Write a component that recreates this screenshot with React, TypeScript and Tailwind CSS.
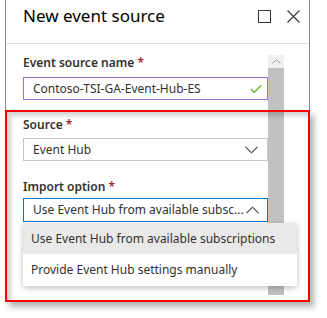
import React from 'react';

const font = { fontFamily: '"Noto Sans", "Open Sans", sans-serif' };

function Label({ text }: { text: string }) {
  return (
    <div className="h-4 text-[12px] leading-4 font-semibold text-[#323130]">
      {text} <span className="text-[#a4262c]">*</span>
    </div>
  );
}

export default function App() {
  return (
    <div className="relative w-[327px] h-[318px] bg-white overflow-hidden" style={font}>
      {/* Blade */}
      <div className="ml-[5px] w-[305px] h-[302px] border-l border-r border-[#8a8a8a] flex flex-col bg-white">
        {/* Header */}
        <div className="h-[44px] flex items-start border-b border-[#e1e1e1]">
          <div className="pl-[17px] pt-[4px] text-[17px] leading-6 text-black flex-1">New event source</div>
          <svg className="mt-[10px]" width="13" height="13" viewBox="0 0 13 13">
            <rect x="0.5" y="0.5" width="12" height="12" fill="none" stroke="#333" strokeWidth="1" />
          </svg>
          <svg className="mt-[10px] ml-[16px] mr-[9px]" width="13" height="13" viewBox="0 0 13 13">
            <path d="M0.5 0.5 L12.5 12.5 M12.5 0.5 L0.5 12.5" stroke="#333" strokeWidth="1.1" />
          </svg>
        </div>

        {/* Body */}
        <div className="flex flex-1">
          <div className="pl-[17px] pt-[11px] w-[262px]">
            <Label text="Event source name" />
            <div className="mt-[6px] h-[23px] w-[245px] border border-[#a26ecf] flex items-center pl-[9px] pr-[5px] text-[12px] text-[#323130]">
              <span className="flex-1">Contoso-TSI-GA-Event-Hub-ES</span>
              <svg width="12" height="10" viewBox="0 0 12 10">
                <path d="M0.8 5 L4.2 8.4 L11.2 1.2" fill="none" stroke="#6bb33b" strokeWidth="1.4" />
              </svg>
            </div>

            <div className="mt-[17px]">
              <Label text="Source" />
            </div>
            <div className="mt-[5px] h-[23px] w-[245px] border border-[#c8c8c8] flex items-center pl-[9px] pr-[9px] text-[12px] text-[#323130]">
              <span className="flex-1">Event Hub</span>
              <svg width="13" height="8" viewBox="0 0 13 8">
                <path d="M0.5 0.8 L6.5 6.8 L12.5 0.8" fill="none" stroke="#444" strokeWidth="1.1" />
              </svg>
            </div>

            <div className="mt-[18px]">
              <Label text="Import option" />
            </div>
            <div className="mt-[3px] h-[24px] w-[245px] border border-[#0078d4] flex items-center pl-[9px] pr-[8px] text-[12px] text-[#323130]">
              <span className="flex-1 whitespace-nowrap">Use Event Hub from available subsc...</span>
              <svg width="13" height="8" viewBox="0 0 13 8">
                <path d="M0.5 7.2 L6.5 1.2 L12.5 7.2" fill="none" stroke="#444" strokeWidth="1.1" />
              </svg>
            </div>
          </div>

          {/* Scrollbar */}
          <div className="mt-[11px] w-[16px] flex flex-col">
            <div className="h-[13px] bg-[#f0f0f0] flex items-center justify-center">
              <svg width="9" height="5" viewBox="0 0 9 5">
                <path d="M0.5 4.5 L4.5 0.7 L8.5 4.5" fill="none" stroke="#a0a0a0" strokeWidth="1" />
              </svg>
            </div>
            <div className="h-[227px] bg-[#c1c1c1]" />
          </div>
        </div>
      </div>

      {/* Dropdown list */}
      <div className="absolute left-[23px] top-[223px] w-[274px] bg-white shadow-[0_2px_6px_rgba(0,0,0,0.25)] text-[12px] text-[#323130]">
        <div className="h-[31px] bg-[#e9e9e9] flex items-center pl-[8px] whitespace-nowrap">
          Use Event Hub from available subscriptions
        </div>
        <div className="h-[32px] flex items-center pl-[8px] whitespace-nowrap">
          Provide Event Hub settings manually
        </div>
      </div>

      {/* Red highlight */}
      <div className="absolute left-[5px] top-[110px] w-[305px] h-[192px] border-2 border-[#ff0000] shadow-[inset_4px_4px_5px_rgba(0,0,0,0.18),4px_5px_6px_rgba(0,0,0,0.3)] pointer-events-none" />
    </div>
  );
}
